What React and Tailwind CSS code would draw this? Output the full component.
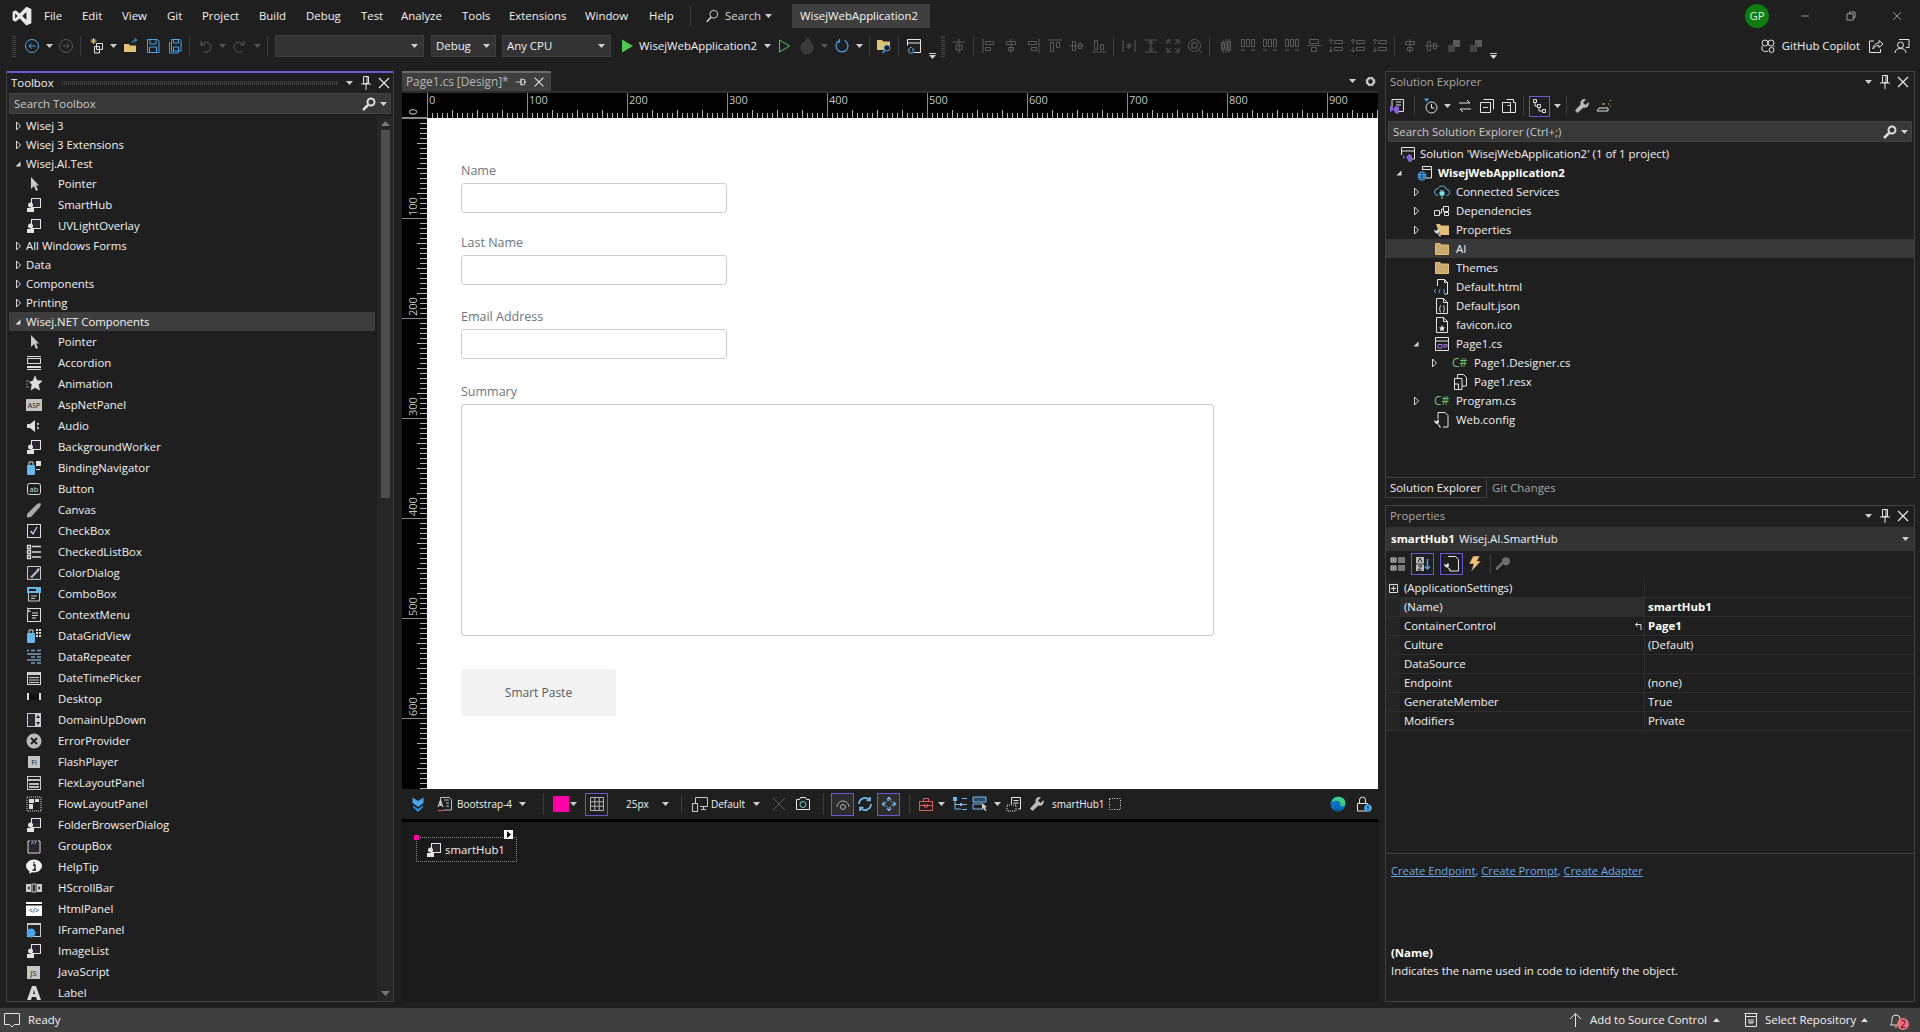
import React from 'react';

const W = '#e4e4e4', D = '#5a5a5a', B = '#4aa3e8', Y = '#e3c078';
const L1 = (d, s = W, sw = 1) => <path d={d} stroke={s} strokeWidth={sw} />;
const comp = <g><rect x="5.5" y="1.5" width="9" height="9" fill="#2a2433" stroke={W} /><circle cx="4.5" cy="8" r="2.5" fill={W} /><path d="M1 11h7v4H1z" fill={W} /></g>;
const dis = (d) => L1(d, D);

const G = {
  back: <g><circle cx="8" cy="8" r="6.5" stroke={B} /><path d="M11.5 8H5M7.5 5.5 5 8l2.5 2.5" stroke={B} /></g>,
  fwd: <g><circle cx="8" cy="8" r="6.5" stroke={D} /><path d="M4.5 8H11M8.5 5.5 11 8l-2.5 2.5" stroke={D} /></g>,
  newp: <g><path d="M6.5 5.5h6v6h-6zM4.5 8.5h5v6.5h-5z" stroke={W} fill="#1f1f1f" /><path d="M3.5 0v6M.5 3h6M1.5 1l4 4M5.5 1l-4 4" stroke={Y} /></g>,
  open: <g><path d="M1 6h5l1 1.5h6v6.5H1z" fill={Y} /><path d="M9 5c0-2 2-3 4-3M11.5.5 14 2l-2.5 2" stroke={B} /></g>,
  save: <path d="M2.5 1.5h10l1.500 1.500v11.500h-11.500zM5 1.500v4.500h6v-4.500M4.500 14.500v-5.500h7v5.500" stroke={B} />,
  saveall: <path d="M4.500 1.500h8.500l1 1v10.500h-9.500zM6.500 1.500v3.500h5v-3.500M6.500 14v-5h5v5M2.500 4v11h9" stroke={B} />,
  undo: <path d="M4 3v4h4M4.500 7a5 5 0 1 1 2 6.500" stroke={D} />,
  redo: <path d="M12 3v4H8M11.500 7a5 5 0 1 0-2 6.500" stroke={D} />,
  play: <path d="M3 1.500 14 8 3 14.500z" fill="#4ec94e" />,
  playo: <path d="M3.500 2 13.500 8l-10 6z" stroke="#4ec94e" />,
  fire: <path d="M9 0c1 3 5 5 5 10a6 6 0 0 1-12 0c0-3 1-4 3-6 0 1 .5 2 1 2 0-3 1-4 3-6z" fill="#3a3a3a" stroke="#444" />,
  restart: <path d="M5.500 2.500a6 6 0 1 0 5 0M5.500 1v3H2.500" stroke={B} strokeWidth="1.200" />,
  findf: <g><path d="M1 2h5l1 1.500h7V12H1z" fill={Y} /><circle cx="11" cy="10" r="3" fill="#1f1f1f" stroke={B} /><path d="M9 12.500 6.500 15" stroke={B} strokeWidth="1.500" /></g>,
  win: <g><path d="M1.500 1.500h13v13H8M1.500 1.500v6M1.500 5h13M11 14.500h3.500" stroke={W} /><path d="M1.500 12 5 9l3.500 3M3 11.500v3.500h4v-3.500" stroke={B} /></g>,
  taborder: dis('M8 1v14M2 4h12M5 7h6v5H5z'),
  a1: dis('M2 1v14M4.500 3.500h8v3h-8zM4.500 9.500h5v3h-5z'),
  a2: dis('M8 1v14M3.500 3.500h9v3h-9zM5.500 9.500h5v3h-5z'),
  a3: dis('M14 1v14M3.500 3.500h8v3h-8zM6.500 9.500h5v3h-5z'),
  a4: dis('M1 2h14M3.500 4.500h3v9h-3zM9.500 4.500h3v5h-3z'),
  a5: dis('M1 8h14M3.500 3.500h3v9h-3zM9.500 5.500h3v5h-3z'),
  a6: dis('M1 14h14M3.500 2.500h3v9h-3zM9.500 6.500h3v5h-3z'),
  a7: dis('M2 2v12M14 2v12M8 5v6M5.500 6.500l5 3M10.500 6.500l-5 3'),
  a8: dis('M2 2h12M2 14h12M8 3v10M5.500 5.500 8 3l2.500 2.500M5.500 10.500 8 13l2.500-2.500'),
  a9: dis('M2 6V2h4M10 2h4v4M14 10v4h-4M6 14H2v-4M3 3l3 3M13 3l-3 3M3 13l3-3M13 13l-3-3'),
  a10: <g><circle cx="7.500" cy="7.500" r="6" stroke={D} /><rect x="5" y="5" width="5" height="5" stroke={D} /><path d="m12 12 3 3" stroke={D} /></g>,
  a11: dis('M3.500 4.500h3v7h-3zM9.500 3.500h3v9h-3zM8 1v14M5 2v13M11 1v14'),
  a12: dis('M1.500 1.500h3v7h-3zM6.500 1.500h3v7h-3zM11.500 1.500h3v7h-3zM1 12h4M11 12h4'),
  a13: dis('M3.500 1.500h9v4h-9zM5.500 9.500h5v4h-5zM1 7.500h14'),
  a14: dis('M6.500 2.500h8v3h-8zM6.500 9.500h8v3h-8zM3 1v5M3 9v5M1 3l2-2 2 2M1 12l2 2 2-2'),
  a15: <g><rect x="7" y="2" width="7" height="7" fill={D} /><rect x="2" y="7" width="7" height="7" fill="#444" /></g>,
  copilot: <g><circle cx="5" cy="5" r="3" stroke={W} /><circle cx="11" cy="5" r="3" stroke={W} /><path d="M2 8v4c2 2 5 2 6 1M14 8v1" stroke={W} /><circle cx="11.500" cy="12" r="2.500" stroke={W} /></g>,
  share: <path d="M6 3H1.500v11.500h11V11M5 11c0-4 3-6 6-6V2.500L15 6l-4 3.500V7.500c-3 0-5 1-6 3.500" stroke={W} />,
  fb: <g><path d="M5 1.500h10v8h-3" stroke={W} /><circle cx="6.500" cy="7" r="3" stroke={W} /><path d="M1 15c0-3 2-4.500 5.500-4.500S12 12 12 15" stroke={W} /></g>,
  gridbox: L1('M1.500 1.500h13v13h-13zM1.500 5.800h13M1.500 10.200h13M5.800 1.500v13M10.200 1.500v13', '#b5b5b5'),
  wlogo: <g><path d="M2.500 1.500 8 5l5.500-3.500V7L8 11 2.500 7z" fill={B} /><path d="M3 9.500 8 13l5-3.500V11l-5 5-5-5z" fill="#2f8fe0" /></g>,
  theme: <g><path d="M3.500 10V1.500h9l2 2V14H7" stroke="#bdbdbd" /><path d="M7 4h5M9 7h3M9 10h3" stroke="#bdbdbd" /><path d="M1 11 3.500 4 6 11M2 9h3" stroke="#ddd" /><path d="M1 14.500h6" stroke="#e55" /></g>,
  device: <g><path d="M3.500 7V1.500h12v9H8M9 13.500h5M11.500 10.500v3" stroke="#c8c8c8" /><rect x=".5" y="7.500" width="5" height="8" fill="#1f1f1f" stroke="#c8c8c8" /></g>,
  x2: L1('M2 2l12 12M14 2 2 14', D),
  cam: <g><path d="M1.500 3.500h3l1-2h5l1 2h3v10h-13z" stroke={W} /><circle cx="8" cy="8.500" r="3" stroke="#6fd3c7" /></g>,
  eye: <g><path d="M2 11a6 6 0 0 1 12 0" stroke="#b0b0b0" /><circle cx="8" cy="11" r="2.500" stroke="#b0b0b0" /></g>,
  refresh: <path d="M2 8a6 6 0 0 1 10.500-4M14 8a6 6 0 0 1-10.500 4M13 1v3.500H9.500M3 15v-3.500h3.500" stroke="#74b9f0" strokeWidth="1.700" />,
  move: <g><path d="m8 .5 3 3H5zM8 15.500l-3-3h6zM.5 8l3-3v6zM15.500 8l-3 3V5z" fill="#74b9f0" /><circle cx="8" cy="8" r="3.500" stroke="#74b9f0" strokeDasharray="2 1.500" /></g>,
  toolboxr: <g><rect x="1.500" y="5.500" width="13" height="9" stroke="#e05a5a" /><path d="M5.500 5.500v-3h5v3M1.500 9.500h13M6.500 8v3h3V8" stroke="#e05a5a" /></g>,
  tree: <g><path d="M3 5v8h6M3 8.500h6" stroke="#74b9f0" /><path d="M1 1h4v4H1zM10 2h5v1h-5zM10 8h5v1h-5zM10 13h5v1h-5zM8 7h2v3H8z" fill="#74b9f0" /></g>,
  tabord: <g><path d="M1 1h13v5H1z" stroke="#74b9f0" fill="#2a4a6a" /><path d="M1 8h10v5H1z" stroke="#74b9f0" /><path d="m10 7 5 4-2 .5 1.500 3-1.500.5-1.500-3-1.500 1.500z" fill="#ccc" /></g>,
  docg: <g><path d="M5.500 8V1.500h9V13H12M7.500 4.500h5M7.500 7h5" stroke={W} /><path d="M1 9h9v6H1z" stroke={W} strokeDasharray="1 1" /></g>,
  wrench: <path d="M14.500 4 11.500 7 9 4.500l3-3a4 4 0 0 0-5.500 5L1 12.500 3.500 15 9.500 9.500a4 4 0 0 0 5-5.500z" fill="#b8b8b8" />,
  dots: <path d="M2.500 2.500h11v11h-11z" stroke={W} strokeDasharray="1 1.500" />,
  edge: <g><circle cx="8" cy="8" r="7.500" fill="#0b6fbf" /><path d="M1.500 6C3 1 9-.5 13 2c2 1.500 3 4.500 2 7-1 1.500-4 2-4.500 0C11 6 8 4 5 5z" fill="#3fc98a" /><path d="M5 9c0 4 5 6 9 3-2 3.500-6 4-9 2z" fill="#0a4f9a" /></g>,
  lock: <g><path d="M1.500 7.500h10v7.500h-10zM3.500 7.500V4a3 3 0 0 1 6 0v3.500" stroke={W} /><circle cx="12" cy="12" r="3.800" fill={B} /><path d="M12 10v2.500M12 13.500v1" stroke="#111" /></g>,
  vsfile: <g><path d="M3 1.500h11.500v12H9M3 1.500v8" stroke={W} /><path d="M7 4h5M7 7h5" stroke={W} /><path d="M1 8v6l2-1 2-2-2-2zM4 11l3-3 3 1v6l-3 1z" fill="#8a60d6" /></g>,
  clock: <g><path d="M1 .5h5L3.500 4z" fill={B} /><circle cx="8.500" cy="9.500" r="5.500" stroke={W} /><path d="M8.500 6v4h3" stroke={W} /></g>,
  sync: <path d="M2 5h11M10 2l3 3M14 11H3M6 14l-3-3" stroke={W} />,
  collapse: <g><path d="M4.500 1.500h10v10M1.500 4.500h10v10h-10z" stroke={W} /><path d="M4 9.500h5" stroke={W} /></g>,
  pages: <g><path d="M5.500 1.500h7v3h2v10h-5M1.500 4.500h8v10h-8z" stroke={W} /><path d="M6.500 7.500h3v7" stroke={W} /></g>,
  nodes: <g><path d="M1.500 1.500h3v3h-3zM5.500 6.500h3v3h-3zM10.500 11.500h3v3h-3z" stroke={W} /><path d="M3 4.500V8h2.500M7 9.500V13h3.500" stroke={W} /></g>,
  ell: <g><path d="M1 13h11v-3H3L1 13z" stroke={W} /><path d="M6 6h3M12 6h1M14 3l1-1M14 8h1" stroke={Y} /></g>,
  sol: <g><path d="M1.500 9V1.500h13V13H10M1.500 5h13" stroke={W} /><path d="M3 9l2 2-2 2zM6 11l3-3 3 1.500v6L9 16z" fill="#8a60d6" /></g>,
  proj: <g><path d="M5.500 5V1.500h9V13H8M5.500 4.500h9" stroke={W} /><circle cx="5" cy="11" r="4.500" fill={B} /><path d="M.5 11h9M5 6.500v9M1.500 8.500h7M1.500 13.500h7" stroke="#123" strokeWidth=".6" /></g>,
  conn: <g><path d="M4 11.500a3.500 3.500 0 0 1 0-7 4.500 4.500 0 0 1 8.500 1 3 3 0 0 1 0 6" stroke="#59b5d6" /><path d="M6 8h4v3H6zM8 11v4M7 8V6M9 8V6" fill="#7fe0e0" stroke="#7fe0e0" /></g>,
  deps: <g><path d="M.5 7.500h5v5h-5zM9.500 3.500h5v5h-5zM10.500 9.500h4v3h-4z" stroke={W} /><path d="M5.500 10h2V6h2" stroke={W} /></g>,
  propf: <g><path d="M2 2h4l1 1.500h8V13H6z" fill={Y} /><path d="M7 14 4 11a2.500 2.500 0 0 0 0-4L2 9 .5 7.500a3 3 0 0 0 3 4L6 15z" fill="#ddd" /></g>,
  folder: <path d="M1.500 2.500h4.500l1.500 1.500h7v9.500h-13z" fill="#c8a86c" stroke="#e3c078" />,
  html: <g><path d="M3.500 7V.5h7l3 3V15H10M10.500.5v3h3" stroke={W} /><path d="M2 10l-2 2 2 2M6 10l-1 4M9 10l2 2-2 2" stroke={B} /></g>,
  json: <g><path d="M2.500 .5h7l4 4v11h-11zM9.500.5v4h4" stroke={W} /><path d="M7 7.500c-1 0-1 .5-1 2s-1 1.500-1 1.500 1 0 1 1.500 0 1.500 1 1.500M9 7.500c1 0 1 .5 1 2s1 1.500 1 1.500-1 0-1 1.500 0 1.500-1 1.500" stroke={W} /></g>,
  ico: <g><path d="M2.500 .5h7l4 4v11h-11zM9.500.5v4h4" stroke={W} /><path d="m8 8 1 2.200 2 .3-1.500 1.500.4 2.200-1.900-1-1.900 1 .4-2.200L5 10.500l2-.3z" fill={W} /></g>,
  form: <g><path d="M1.500 1.500h13v13h-13zM1.500 5h13" stroke={W} /><path d="M4 8.500h4v3.500H4zM10 8.500h3v2.500h-3z" stroke="#a078e0" /></g>,
  resx: <g><path d="M5.500 4V.5h6l3 3V12H10M2.500 4.500h7.500v11h-7.500z" stroke={W} /><path d="M2.500 10h4v5.500" stroke={W} /></g>,
  config: <g><path d="M4 7V.5h7l3 3V15H9" stroke={W} /><path d="M7 15 4 11.500a2.500 2.500 0 0 0 0-4L2 9.500.5 8a3 3 0 0 0 3 4L6 16z" fill="#ddd" /></g>,
  catg: <g><path d="M1 2h5v4H1zM1 10h5v4H1z" stroke={W} /><path d="M8 2h7M8 4h7M8 6h7M8 10h7M8 12h7M8 14h7M3.500 3v2M3.500 11v2M2 12h3M2 4h3" stroke={W} strokeWidth=".9" /></g>,
  az: <g><rect x="1" y="1" width="8" height="6.500" fill="#bbb" /><rect x="1" y="8.500" width="8" height="6.500" fill="#bbb" /><path d="m3 6 2-4 2 4M3 10h4l-4 4h4" stroke="#222" /><path d="M12.500 3v10M10 10.500l2.500 2.500 2.500-2.500" stroke={B} strokeWidth="1.500" /></g>,
  propp: <g><path d="M4 .5h7.500l3 3V15h-9" stroke={W} /><path d="M7 14 4 11a2.500 2.500 0 0 0 0-4L2 9 .5 7.500a3 3 0 0 0 3 4L6 15z" fill={W} /></g>,
  flash: <path d="M7 0h7l-3 5h4L5 16l2.500-8H3z" fill="#f5c27a" stroke="#1f1f1f" strokeWidth=".5" />,
  key: <path d="M15 5a4 4 0 0 1-7 3L2.500 14H1v-2.500l6-6A4 4 0 0 1 15 5z" fill="#6e6e6e" />,
  up: <path d="M7.500 15V1.500M2 7l5.500-5.500L13 7" stroke={W} />,
  repo: <g><path d="M1.500 1.500h13M2.500 1.500v3h11v-3M2.500 4.500v10h11v-10" stroke={W} /><path d="M6 7v4h4V7M8 7v4" stroke={W} /></g>,
  bell: <path d="M1.500 13h11c-1.500-1.500-1.500-4-1.500-6a4 4 0 0 0-8 0c0 2 0 4.500-1.500 6zM6 15h2" stroke={W} />,
  comment: <path d="M.5 1.500h15v11h-5l-2.500 2.500-2.500-2.500h-5z" stroke={W} />,
  searchw: <g><circle cx="10" cy="6" r="4.500" stroke={W} /><path d="M7 9.500 2 14.500" stroke={W} strokeWidth="1.500" /></g>,
  searchb: <g><circle cx="10" cy="6" r="3.500" stroke="#ddd" strokeWidth="2" /><path d="M7 9 2 14" stroke="#ddd" strokeWidth="2.500" /></g>,
  pin: <path d="M5.500 1.500h5v7h-5zM3 9h10M8 9v6M9 2v6" stroke={W} />,
  close: <path d="M3 3l10 10M13 3 3 13" stroke={W} strokeWidth="1.300" />,
  pinh: <path d="M8 5v6h4V5zM8 8H2M8 4v8M13 7v2" stroke="#ddd" />,
  gear: <g><circle cx="8" cy="8" r="4.500" stroke="#ccc" strokeWidth="3" strokeDasharray="2.500 1" /><circle cx="8" cy="8" r="4" stroke="#ccc" strokeWidth="2" /></g>,
  min: L1('M2 8h12', W),
  restore: L1('M5.500 4.500v-3h9v9h-3M1.500 4.500h10v10h-10z', W),
  closew: L1('M2 2l12 12M14 2 2 14', W),
  pointer: <path d="M5 1v12l3-3 2 5 2-1-2-4.500h3z" fill="#c8c8c8" />,
  comp,
  accordion: <g><path d="M1 1h14v1H1zM1 11h14v2H1zM1 14h14v1H1zM1 3h14v6H1z" fill="#ddd" /><rect x="2" y="4" width="12" height="4" fill="#222" /></g>,
  anim: <path d="m9 0 2 4.500 5 .5-3.500 3.500 1 5.500L9 11.500 5 14 6 8.500 3.500 6 7 5zM0 5h3M0 8h2M0 11h3" fill="#ddd" stroke="#ddd" strokeWidth=".6" />,
  asp: <g><rect width="16" height="12" y="2" fill="#c4c4c4" /><text x="8" y="11" fontSize="7" textAnchor="middle" fill="#111">ASP</text></g>,
  audio: <g><path d="M1 6h3l5-4v12l-5-4H1z" fill="#ddd" /><path d="M11 5l2 1-2 1M11 9l2 1-2 1" stroke="#ddd" /></g>,
  binding: <g><rect x="1" y="5" width="8" height="10" rx="1" fill="#69b6e8" /><path d="M3 5V2h4v3" stroke="#ddd" /><rect x="10" y="1" width="5" height="5" fill="#ddd" /><path d="M10 9h4v1h-4z" fill="#ddd" /></g>,
  button: <g><rect x="1.500" y="2.500" width="13" height="11" rx="2" stroke="#ddd" /><text x="8" y="11" fontSize="7.500" textAnchor="middle" fill="#ddd">ab</text></g>,
  pencil: <path d="M1 12 11 2l3-1 1 1-1 3L5 15l-4 .5z" fill="#aaa" />,
  check: <g><rect x="1.500" y="1.500" width="13" height="13" stroke="#ddd" fill="#201d28" /><path d="m4.500 8 2.500 3 4-7" stroke="#ddd" strokeWidth="1.200" /></g>,
  clist: <path d="M1.500 1.500h3v3h-3zM1.500 6.500h3v3h-3zM1.500 11.500h3v3h-3zM6 2.500h9M6 8h9M6 13h9" stroke="#ddd" strokeWidth="1.300" />,
  color: <g><path d="M1.500 1.500h13v13h-13z" stroke="#ccc" fill="#24212a" /><path d="m4 12 6-6 2-3 2 1-2 3-6 6z" fill="#bbb" /><path d="M2 14h2" stroke="#e44" /><path d="M6 14h2" stroke="#4c6" /><path d="M10 14h2" stroke="#49d" /></g>,
  combo: <g><rect x="1" y="1" width="14" height="6" fill="#69b6e8" /><rect x="3" y="3" width="7" height="2" fill="#111" /><path d="M2.500 7v8h11V7M5 10h6M5 12.500h4" stroke="#ccc" /></g>,
  context: <g><rect x="1.500" y="1.500" width="13" height="13" stroke="#ddd" /><path d="M6 6h6M6 8.500h6M6 11h4" stroke="#ddd" /><path d="M1 0v7l2-2 2 0z" fill="#aaa" /></g>,
  dgrid: <g><rect x="1" y="5" width="8" height="10" rx="1" fill="#69b6e8" /><path d="M3 5V2h4v3" stroke="#ddd" /><path d="M10 1h2v2h-2zM13 1h2v2h-2zM10 4h2v2h-2zM13 4h2v2h-2zM10 7h2v2h-2zM13 7h2v2h-2z" fill="#ddd" /></g>,
  repeat: <path d="M1 1.500h2M5 1.500h4M11 1.500h4M1 5h14M5 8h4M11 8h4M1 11h14M5 14h4M11 14h4" stroke="#7c9cc0" strokeWidth="1.500" />,
  date: <g><rect x="1.500" y="2.500" width="13" height="12" stroke="#ddd" fill="#222" /><path d="M2 2h12v3H2z" fill="#ccc" /><path d="M3 7h10v1H3zM3 9.500h10v1H3zM3 12h10v1H3z" fill="#ccc" /></g>,
  desktop: <g><path d="M1 2h2v7H1zM13 2h2v7h-2z" fill="#ddd" /><path d="M3 3h10v6H3z" fill="#111" /></g>,
  updown: <g><rect x="1" y="1" width="14" height="14" fill="#ccc" /><rect x="2" y="2" width="7" height="12" fill="#2a2433" /><path d="m10 6 2-3 2 3zM10 10l2 3 2-3z" fill="#222" /></g>,
  error: <g><circle cx="8" cy="8" r="7.500" fill="#bbb" /><path d="m5 5 6 6M11 5l-6 6" stroke="#222" strokeWidth="2" /></g>,
  flashp: <g><rect x="2" y="2" width="12" height="12" fill="#c4c4c4" /><text x="8" y="11" fontSize="7" textAnchor="middle" fill="#111">Fl</text></g>,
  flex: <g><rect x="1.500" y="1.500" width="13" height="13" stroke="#ccc" /><path d="M2 4h12v2H2zM3 8h10v2H3zM3 11h10v2H3z" fill="#bbb" /></g>,
  flow: <g><path d="M1 1h14v14H1z" stroke="#ddd" strokeDasharray="1 1" /><path d="M3 3h5v4H3zM9 3h4v3H9zM3 8h4v5H3z" fill="#ddd" /></g>,
  group: <g><path d="M2 3v12h12V3h-2M4 3H2" stroke="#ddd" /><path d="M3 5h10v9H3z" fill="#2a2433" /><text x="8" y="5.500" fontSize="5.500" textAnchor="middle" fill="#ddd">XY</text></g>,
  help: <g><ellipse cx="8" cy="7" rx="8" ry="6.500" fill="#f0f0f0" /><path d="M4 11 3 15l5-3z" fill="#f0f0f0" /><path d="M8 3v1.500M7 6h2v5M6.500 11H10" stroke="#111" strokeWidth="1.300" /></g>,
  hscroll: <g><rect y="4" width="5" height="8" fill="#ccc" /><rect x="6" y="4" width="4" height="8" fill="#333" stroke="#ccc" /><rect x="11" y="4" width="5" height="8" fill="#ccc" /><path d="M3.500 6v4L1.500 8zM12.500 6v4l2-2z" fill="#111" /></g>,
  htmlp: <g><rect y="1" width="16" height="14" fill="#fff" /><path d="M0 3h16v1.500H0z" fill="#111" /><text x="8" y="12" fontSize="7" textAnchor="middle" fill="#111">{'</>'}</text></g>,
  iframe: <g><rect x="1.500" y="1.500" width="13" height="13" stroke="#ccc" fill="#222" /><path d="M1 1h14v2H1z" fill="#ccc" /><circle cx="5" cy="11" r="4.500" fill={B} /></g>,
  js: <g><rect x="1" y="2" width="13" height="13" fill="#c4c4c4" /><text x="7.500" y="12" fontSize="8" textAnchor="middle" fill="#222">JS</text></g>,
  label: <path d="M6 1h4l5 14h-4l-1-3H6l-1 3H1zM7 9h2L8 5z" fill="#d8d8d8" fillRule="evenodd" />,
};

const Ic = ({ n, c = '', s = 'w-4 h-4' }) => <svg viewBox="0 0 16 16" fill="none" className={`${s} shrink-0 ${c}`}>{G[n]}</svg>;
const Arr = ({ c = '', col = '#d0d0d0' }) => <svg viewBox="0 0 7 4" className={`w-[7px] h-[4px] shrink-0 ${c}`}><path d="M0 0h7L3.500 4z" fill={col} /></svg>;
const Sep = ({ c = '' }) => <div className={`w-px h-[20px] bg-[#3d3d3d] shrink-0 ${c}`} />;
const Grip = ({ c = '' }) => <div className={`w-[4px] h-[22px] shrink-0 bg-[repeating-linear-gradient(0deg,#444_0,#444_1px,transparent_1px,transparent_2px)] ${c}`} />;
const Tri = ({ open }) => (
  <svg viewBox="0 0 10 10" className="w-[10px] h-[10px] shrink-0">
    {open ? <path d="M7.500 2.500v5h-5z" fill="#d8d8d8" /> : <path d="M3.500 1 7.500 5l-4 4z" stroke="#d8d8d8" fill="none" />}
  </svg>
);
const Combo = ({ w, text, ml }) => (
  <div className={`${w} ${ml} h-[22px] shrink-0 bg-[#333333] border border-[#3d3d3d] flex items-center pl-[4px] pr-[5px]`}>
    <span>{text}</span><Arr c="ml-auto" />
  </div>
);
const Search = ({ text, c }) => (
  <div className={`h-[21px] shrink-0 bg-[#383838] border border-[#434343] flex items-center pl-[4px] pr-[3px] text-[#c8c8c8] ${c}`}>
    <span>{text}</span><Ic n="searchb" c="ml-auto" /><Arr c="ml-[3px]" />
  </div>
);

const MENU = [['File', 'w-[38px]'], ['Edit', 'w-[40px]'], ['View', 'w-[45px]'], ['Git', 'w-[35px]'], ['Project', 'w-[57px]'], ['Build', 'w-[47px]'], ['Debug', 'w-[55px]'], ['Test', 'w-[40px]'], ['Analyze', 'w-[61px]'], ['Tools', 'w-[47px]'], ['Extensions', 'w-[76px]'], ['Window', 'w-[64px]'], ['Help', 'w-[41px]']];

function TitleBar() {
  return (
    <div className="h-[32px] flex items-center shrink-0">
      <svg viewBox="0 0 16 16" className="w-[20px] h-[20px] ml-[12px] mr-[12px] shrink-0">
        <path d="M11.500.5 15.500 2.300v11.400l-4 1.800L6.200 10 2.800 12.600.5 11.400V4.600l2.300-1.200L6.200 6zM2.500 6v4l2-2zM11.500 4.800 8.300 8l3.200 3.200z" fill="#e8e8e8" fillRule="evenodd" />
      </svg>
      {MENU.map(([t, w]) => <div key={t} className={`${w} shrink-0`}>{t}</div>)}
      <div className="w-px h-[20px] bg-[#3d3d3d] shrink-0" />
      <Ic n="searchw" c="ml-[14px]" s="w-[14px] h-[14px]" />
      <span className="ml-[6px] w-[36px] text-[#d8d8d8]">Search</span>
      <Arr c="ml-[4px]" />
      <div className="ml-[20px] w-[138px] h-[24px] bg-[#3f3f3f] flex items-center pl-[8px] shrink-0 text-[#f5f5f5]">WisejWebApplication2</div>
      <div className="ml-auto w-[24px] h-[24px] rounded-full bg-[#107c10] flex items-center justify-center text-[#d8f0d8] shrink-0">GP</div>
      <Ic n="min" c="ml-[31px]" s="w-[10px] h-[10px]" />
      <Ic n="restore" c="ml-[36px]" s="w-[10px] h-[10px]" />
      <Ic n="closew" c="ml-[36px] mr-[18px]" s="w-[10px] h-[10px]" />
    </div>
  );
}

function ToolBar() {
  return (
    <div className="h-[38px] flex items-center pl-[12px] pb-[10px] shrink-0">
      <Grip />
      <Ic n="back" c="ml-[8px]" /><Arr c="ml-[6px]" /><Ic n="fwd" c="ml-[5px]" /><Sep c="ml-[6px]" />
      <Ic n="newp" c="ml-[9px]" /><Arr c="ml-[4px]" /><Ic n="open" c="ml-[6px]" /><Ic n="save" c="ml-[6px]" /><Ic n="saveall" c="ml-[6px]" /><Sep c="ml-[6px]" />
      <Ic n="undo" c="ml-[7px]" /><Arr c="ml-[6px]" col="#555" /><Ic n="redo" c="ml-[6px]" /><Arr c="ml-[6px]" col="#555" /><Sep c="ml-[6px]" />
      <Combo w="w-[149px]" ml="ml-[7px]" text="" />
      <Combo w="w-[65px]" ml="ml-[7px]" text="Debug" />
      <Combo w="w-[109px]" ml="ml-[6px]" text="Any CPU" />
      <Ic n="play" c="ml-[8px]" />
      <span className="ml-[4px] w-[119px] shrink-0 whitespace-nowrap">WisejWebApplication2</span>
      <Arr c="ml-[6px]" /><Ic n="playo" c="ml-[5px]" /><Ic n="fire" c="ml-[7px]" /><Arr c="ml-[6px]" col="#555" /><Ic n="restart" c="ml-[6px]" /><Arr c="ml-[6px]" /><Sep c="ml-[6px]" />
      <Ic n="findf" c="ml-[6px]" /><Sep c="ml-[6px]" /><Ic n="win" c="ml-[7px]" />
      <div className="ml-[7px] w-[7px] flex flex-col items-center gap-[1px] self-end mb-[1px] shrink-0"><div className="w-[7px] h-px bg-[#ccc]" /><Arr /></div>
      <Grip c="ml-[5px]" />
      <Ic n="taborder" c="ml-[6px]" /><Sep c="ml-[6px]" />
      <div className="flex items-center gap-[6px] ml-[7px]">
        <Ic n="a1" /><Ic n="a2" /><Ic n="a3" /><Ic n="a4" /><Ic n="a5" /><Ic n="a6" />
      </div>
      <Sep c="ml-[6px]" />
      <div className="flex items-center gap-[6px] ml-[7px]">
        <Ic n="a7" /><Ic n="a8" /><Ic n="a9" /><Ic n="a10" />
      </div>
      <Sep c="ml-[6px]" />
      <div className="flex items-center gap-[6px] ml-[8px]">
        <Ic n="a11" /><Ic n="a12" /><Ic n="a12" /><Ic n="a12" /><Ic n="a13" /><Ic n="a14" /><Ic n="a14" /><Ic n="a14" />
      </div>
      <Sep c="ml-[6px]" />
      <div className="flex items-center gap-[6px] ml-[7px]">
        <Ic n="a2" /><Ic n="a5" /><Ic n="a15" /><Ic n="a15" />
      </div>
      <div className="ml-[6px] w-[7px] flex flex-col items-center gap-[1px] self-end mb-[1px] shrink-0"><div className="w-[7px] h-px bg-[#ccc]" /><Arr /></div>
      <Ic n="copilot" c="ml-auto" />
      <span className="ml-[6px] whitespace-nowrap">GitHub Copilot</span>
      <Ic n="share" c="ml-[8px]" /><Ic n="fb" c="ml-[10px] mr-[10px]" />
    </div>
  );
}

const Head = ({ title, active }) => (
  <div className="flex items-center h-[20px] shrink-0 pl-[4px]">
    <span className={active ? 'text-[#f1f1f1]' : 'text-[#a8a8a8]'}>{title}</span>
    {active && <div className="flex-1 h-[4px] ml-[8px] mr-[8px] bg-[repeating-linear-gradient(90deg,#444_0,#444_1px,transparent_1px,transparent_2px)]" />}
    <Arr c={active ? 'ml-0' : 'ml-auto'} />
    <Ic n="pin" c="ml-[5px]" />
    <Ic n="close" c={active ? 'ml-[2px] mr-[1px]' : 'ml-[2px] mr-[3px]'} />
  </div>
);

const TB = [
  ['c', 'Wisej 3'], ['c', 'Wisej 3 Extensions'], ['o', 'Wisej.AI.Test'],
  ['i', 'Pointer', 'pointer'], ['i', 'SmartHub', 'comp'], ['i', 'UVLightOverlay', 'comp'],
  ['c', 'All Windows Forms'], ['c', 'Data'], ['c', 'Components'], ['c', 'Printing'], ['h', 'Wisej.NET Components'],
  ['i', 'Pointer', 'pointer'], ['i', 'Accordion', 'accordion'], ['i', 'Animation', 'anim'], ['i', 'AspNetPanel', 'asp'], ['i', 'Audio', 'audio'],
  ['i', 'BackgroundWorker', 'comp'], ['i', 'BindingNavigator', 'binding'], ['i', 'Button', 'button'], ['i', 'Canvas', 'pencil'], ['i', 'CheckBox', 'check'],
  ['i', 'CheckedListBox', 'clist'], ['i', 'ColorDialog', 'color'], ['i', 'ComboBox', 'combo'], ['i', 'ContextMenu', 'context'], ['i', 'DataGridView', 'dgrid'],
  ['i', 'DataRepeater', 'repeat'], ['i', 'DateTimePicker', 'date'], ['i', 'Desktop', 'desktop'], ['i', 'DomainUpDown', 'updown'], ['i', 'ErrorProvider', 'error'],
  ['i', 'FlashPlayer', 'flashp'], ['i', 'FlexLayoutPanel', 'flex'], ['i', 'FlowLayoutPanel', 'flow'], ['i', 'FolderBrowserDialog', 'comp'], ['i', 'GroupBox', 'group'],
  ['i', 'HelpTip', 'help'], ['i', 'HScrollBar', 'hscroll'], ['i', 'HtmlPanel', 'htmlp'], ['i', 'IFramePanel', 'iframe'], ['i', 'ImageList', 'comp'], ['i', 'JavaScript', 'js'], ['i', 'Label', 'label'],
];

function Toolbox() {
  return (
    <div className="w-[388px] shrink-0 flex flex-col border-x border-b border-[#3f3f3f]">
      <div className="h-[2px] bg-[#6a58d8] shrink-0" />
      <Head title="Toolbox" active />
      <Search text="Search Toolbox" c="mx-[2px]" />
      <div className="flex flex-1 min-h-0 pt-[2px]">
        <div className="ml-[2px] w-[366px] mr-[2px] overflow-hidden">
          {TB.map(([k, t, ic], i) => k === 'i' ? (
            <div key={i} className="h-[21px] flex items-center pl-[17px]"><Ic n={ic} /><span className="ml-[16px]">{t}</span></div>
          ) : (
            <div key={i} className={`h-[19px] flex items-center pl-[4px] ${k === 'h' ? 'bg-[#3d3d3d]' : ''}`}><Tri open={k !== 'c'} /><span className="ml-[3px]">{t}</span></div>
          ))}
        </div>
        <div className="w-[16px] bg-[#262626] flex flex-col items-center py-[5px]">
          <svg viewBox="0 0 9 5" className="w-[9px] h-[5px] shrink-0"><path d="M0 5h9L4.500 0z" fill="#777" /></svg>
          <div className="w-[9px] h-[368px] bg-[#4d4d4d] mt-[4px] shrink-0" />
          <svg viewBox="0 0 9 5" className="w-[9px] h-[5px] mt-auto shrink-0"><path d="M0 0h9L4.500 5z" fill="#777" /></svg>
        </div>
      </div>
    </div>
  );
}

const range = (n) => Array.from({ length: n }, (_, i) => i);

function HRuler() {
  const ticks = range(191).map((i) => {
    const x = i * 5 + 0.5;
    const big = i % 20 === 0, med = i % 5 === 0;
    return <path key={i} d={`M${x} ${big ? 0 : med ? 17 : 20}V25`} stroke={big ? '#8a8a8a' : '#b4b4b4'} />;
  });
  return (
    <svg className="flex-1 h-[25px] block" viewBox="0 0 951 25" preserveAspectRatio="xMinYMin">
      {ticks}
      {range(10).map((i) => <text key={i} x={i * 100 + 2} y="11" fontSize="11" fill="#c4c4c4">{i * 100}</text>)}
    </svg>
  );
}
function VRuler() {
  return (
    <svg className="w-[25px] h-[671px] block shrink-0" viewBox="0 0 25 671">
      {range(135).map((i) => {
        const y = i * 5 + 0.5, big = i % 20 === 0, med = i % 5 === 0;
        return <path key={i} d={`M${big ? 0 : med ? 15 : 18} ${y}H25`} stroke={big ? '#8a8a8a' : '#b4b4b4'} />;
      })}
      {range(6).map((i) => <text key={i} transform={`translate(15 ${(i + 1) * 100 - 2}) rotate(-90)`} fontSize="11" fill="#c4c4c4">{(i + 1) * 100}</text>)}
    </svg>
  );
}

const Lbl = ({ t, c }) => <div className={`h-[18px] leading-[18px] text-[12.5px] text-[#6c757d] ${c}`}>{t}</div>;
const Inp = ({ c }) => <div className={`w-[266px] h-[30px] bg-white border border-[#cccccc] rounded-[3px] ${c}`} />;

function Document() {
  return (
    <div className="ml-[8px] w-[976px] shrink-0 flex flex-col">
      <div className="h-[20px] flex shrink-0 items-stretch">
        <div className="w-[149px] bg-[#3f3f3f] border-t-2 border-[#6b6b6b] flex items-center pl-[4px] text-[#b8b8b8] text-[11.8px] shrink-0">
          <span className="w-[108px] whitespace-nowrap">Page1.cs [Design]*</span>
          <Ic n="pinh" s="w-[14px] h-[14px]" /><Ic n="close" c="ml-[4px]" s="w-[14px] h-[14px]" />
        </div>
        <Arr c="ml-auto self-center" />
        <Ic n="gear" c="ml-[8px] mr-[1px] self-center" s="w-[13px] h-[13px]" />
      </div>
      <div className="h-[2px] bg-[#2d2d2d] shrink-0" />
      <div className="h-[25px] flex bg-black shrink-0">
        <svg className="w-[25px] h-[25px] shrink-0" viewBox="0 0 25 25">
          <text transform="translate(15 22) rotate(-90)" fontSize="11" fill="#c4c4c4">0</text>
          <path d="M0 24.500H25" stroke="#8a8a8a" />
        </svg>
        <HRuler />
      </div>
      <div className="h-[671px] flex shrink-0 bg-black">
        <VRuler />
        <div className="flex-1 bg-white pl-[34px] pt-[44px]">
          <Lbl t="Name" />
          <Inp c="mt-[3px]" />
          <Lbl t="Last Name" c="mt-[21px]" />
          <Inp c="mt-[3px]" />
          <Lbl t="Email Address" c="mt-[23px]" />
          <Inp c="mt-[3px]" />
          <Lbl t="Summary" c="mt-[24px]" />
          <div className="w-[753px] h-[232px] border border-[#cccccc] rounded-[3px] mt-[3px]" />
          <div className="w-[155px] h-[47px] mt-[33px] bg-[#f3f3f3] rounded-[2px] flex items-center justify-center text-[12px] text-[#555b60]">Smart Paste</div>
        </div>
      </div>
      <div className="h-[30px] flex items-center shrink-0 bg-[#1f1f1f] text-[10px]">
        <Ic n="wlogo" c="ml-[8px]" /><Ic n="theme" c="ml-[11px]" />
        <span className="ml-[4px] w-[54px] whitespace-nowrap">Bootstrap-4</span><Arr c="ml-[8px]" /><Sep c="ml-[17px]" />
        <div className="ml-[9px] w-[16px] h-[16px] bg-[#ff00a8] shrink-0" /><Arr c="ml-[1px]" />
        <div className="ml-[8px] w-[23px] h-[23px] border border-[#6a58d8] flex items-center justify-center shrink-0"><Ic n="gridbox" /></div>
        <span className="ml-[18px] w-[23px]">25px</span><Arr c="ml-[13px]" /><Sep c="ml-[12px]" />
        <Ic n="device" c="ml-[10px]" /><span className="ml-[3px] w-[34px]">Default</span><Arr c="ml-[8px]" />
        <Ic n="x2" c="ml-[11px]" /><Ic n="cam" c="ml-[8px]" /><Sep c="ml-[12px]" />
        <div className="ml-[7px] w-[23px] h-[23px] border border-[#6a58d8] bg-[#2d2d2d] flex items-center justify-center shrink-0"><Ic n="eye" /></div>
        <Ic n="refresh" c="ml-[3px]" />
        <div className="ml-[4px] w-[23px] h-[23px] border border-[#6a58d8] bg-[#2d2d2d] flex items-center justify-center shrink-0"><Ic n="move" /></div>
        <Sep c="ml-[9px]" />
        <Ic n="toolboxr" c="ml-[8px]" /><Arr c="ml-[4px]" /><Ic n="tree" c="ml-[7px]" /><Ic n="tabord" c="ml-[4px]" /><Arr c="ml-[6px]" />
        <Ic n="docg" c="ml-[5px]" /><Ic n="wrench" c="ml-[7px]" />
        <span className="ml-[7px] w-[50px] whitespace-nowrap">smartHub1</span><Ic n="dots" c="ml-[5px]" />
        <Ic n="edge" c="ml-auto" /><Ic n="lock" c="ml-[10px] mr-[6px]" />
      </div>
      <div className="h-[3px] bg-black shrink-0" />
      <div className="flex-1 bg-[#1a1a1a] pl-[14px] pt-[15px]">
        <div className="relative w-[101px] h-[25px] border border-dotted border-[#8a8a8a] flex items-center pl-[9px]">
          <Ic n="comp" /><span className="ml-[3px]">smartHub1</span>
          <div className="absolute -left-[3px] -top-[3px] w-[5px] h-[5px] bg-[#ff00a8]" />
          <div className="absolute left-[87px] -top-[8px] w-[9px] h-[9px] bg-white flex items-center justify-center"><svg viewBox="0 0 4 7" className="w-[4px] h-[7px]"><path d="M0 0 4 3.500 0 7z" fill="#000" /></svg></div>
        </div>
      </div>
    </div>
  );
}

const LV = ['pl-[4px]', 'pl-[8px]', 'pl-[25px]', 'pl-[43px]'];
const SOL = [
  [0, null, 'sol', "Solution 'WisejWebApplication2' (1 of 1 project)"],
  [1, 'o', 'proj', 'WisejWebApplication2', 'b'],
  [2, 'c', 'conn', 'Connected Services'],
  [2, 'c', 'deps', 'Dependencies'],
  [2, 'c', 'propf', 'Properties'],
  [2, null, 'folder', 'AI', 'h'],
  [2, null, 'folder', 'Themes'],
  [2, null, 'html', 'Default.html'],
  [2, null, 'json', 'Default.json'],
  [2, null, 'ico', 'favicon.ico'],
  [2, 'o', 'form', 'Page1.cs'],
  [3, 'c', null, 'Page1.Designer.cs'],
  [3, null, 'resx', 'Page1.resx'],
  [2, 'c', null, 'Program.cs'],
  [2, null, 'config', 'Web.config'],
];

function SolutionExplorer() {
  return (
    <div className="h-[406px] shrink-0 flex flex-col border-x border-t border-[#3f3f3f]">
      <div className="h-[21px] shrink-0"><Head title="Solution Explorer" /></div>
      <div className="h-[26px] flex items-center shrink-0">
        <Ic n="vsfile" c="ml-[3px]" /><Sep c="ml-[9px]" /><Ic n="clock" c="ml-[8px]" /><Arr c="ml-[5px]" />
        <Ic n="sync" c="ml-[6px]" /><Ic n="collapse" c="ml-[6px]" /><Ic n="pages" c="ml-[6px]" /><Sep c="ml-[6px]" />
        <div className="ml-[5px] w-[21px] h-[21px] border border-[#6a58d8] flex items-center justify-center shrink-0"><Ic n="nodes" /></div>
        <Arr c="ml-[4px]" /><Sep c="ml-[5px]" /><Ic n="wrench" c="ml-[7px]" /><Ic n="ell" c="ml-[6px]" />
      </div>
      <Search text="Search Solution Explorer (Ctrl+;)" c="mt-[2px] mx-[2px]" />
      <div className="pt-[2px]">
        {SOL.map(([lv, arrow, ic, t, f], i) => (
          <div key={i} className={`h-[19px] flex items-center ${LV[lv]} ${f === 'h' ? 'bg-[#383838]' : ''}`}>
            {arrow ? <Tri open={arrow === 'o'} /> : <div className="w-[10px] shrink-0" />}
            {ic ? <Ic n={ic} c={lv === 0 ? '' : 'ml-[13px]'} /> : <span className="ml-[13px] w-4 shrink-0 text-[#6cc070] text-[12px] whitespace-nowrap">C#</span>}
            <span className={`${lv === 0 ? 'ml-[4px]' : lv === 1 ? 'ml-[5px]' : 'ml-[6px]'} ${f === 'b' ? 'font-bold text-white' : ''}`}>{t}</span>
          </div>
        ))}
      </div>
    </div>
  );
}

const PR = [
  ['(Name)', 'smartHub1', 'b', true],
  ['ContainerControl', 'Page1', 'b', false, true],
  ['Culture', '(Default)'],
  ['DataSource', ''],
  ['Endpoint', '(none)'],
  ['GenerateMember', 'True'],
  ['Modifiers', 'Private'],
];

function Properties() {
  return (
    <div className="flex-1 mt-[7px] flex flex-col border border-[#3f3f3f] min-h-0">
      <div className="h-[21px] shrink-0"><Head title="Properties" /></div>
      <div className="h-[24px] shrink-0 bg-[#333333] flex items-center pl-[5px] pr-[5px]">
        <span className="font-bold text-white w-[68px] whitespace-nowrap">smartHub1</span><span>Wisej.AI.SmartHub</span><Arr c="ml-auto" />
      </div>
      <div className="h-[26px] shrink-0 flex items-center">
        <Ic n="catg" c="ml-[4px]" />
        <div className="ml-[5px] w-[23px] h-[22px] border border-[#6a58d8] flex items-center justify-center shrink-0"><Ic n="az" /></div>
        <div className="ml-[6px] w-[23px] h-[22px] border border-[#6a58d8] flex items-center justify-center shrink-0"><Ic n="propp" /></div>
        <Ic n="flash" c="ml-[3px]" /><Sep c="ml-[8px]" /><Ic n="key" c="ml-[4px]" />
      </div>
      <div className="mt-[2px] shrink-0">
        <div className="h-[19px] flex border-b border-[#2d2d2d]">
          <div className="w-[14px] flex items-center justify-center shrink-0 bg-[#252525]"><svg viewBox="0 0 9 9" className="w-[9px] h-[9px]"><path d="M.5.500h8v8h-8zM2 4.500h5M4.500 2v5" stroke="#ddd" fill="none" /></svg></div>
          <div className="w-[245px] pl-[4px] flex items-center border-r border-[#2d2d2d] shrink-0">(ApplicationSettings)</div>
        </div>
        {PR.map(([k, v, b, hl, ret]) => (
          <div key={k} className="h-[19px] flex border-b border-[#2d2d2d]">
            <div className="w-[14px] shrink-0 bg-[#252525]" />
            <div className={`w-[245px] pl-[4px] pr-[2px] flex items-center border-r border-[#2d2d2d] shrink-0 ${hl ? 'bg-[#2d2d2d]' : ''}`}>
              <span>{k}</span>
              {ret && <svg viewBox="0 0 8 8" className="w-[8px] h-[8px] ml-auto"><path d="M7 8V2.500H2M3.500.500 1.500 2.500 3.500 4.500" stroke="#ddd" fill="none" /></svg>}
            </div>
            <div className={`flex-1 pl-[3px] flex items-center ${b ? 'font-bold text-white' : ''}`}>{v}</div>
          </div>
        ))}
      </div>
      <div className="h-[122px] shrink-0" />
      <div className="h-[90px] shrink-0 border-t border-[#3f3f3f] pl-[5px] pt-[9px] text-[#6ba8e5] text-[11.2px]">
        <span className="underline">Create Endpoint</span><span>, </span><span className="underline">Create Prompt</span><span>, </span><span className="underline">Create Adapter</span>
      </div>
      <div className="flex-1 px-[5px] pt-[1px]">
        <div className="h-[18px] leading-[18px] font-bold text-white">(Name)</div>
        <div className="h-[18px] leading-[18px]">Indicates the name used in code to identify the object.</div>
      </div>
    </div>
  );
}

function StatusBar() {
  return (
    <div className="h-[24px] bg-[#3f3f3f] flex items-center shrink-0">
      <Ic n="comment" c="ml-[4px]" />
      <span className="ml-[8px]">Ready</span>
      <Ic n="up" c="ml-auto" />
      <span className="ml-[6px] w-[117px] whitespace-nowrap">Add to Source Control</span>
      <svg viewBox="0 0 7 4" className="w-[7px] h-[4px] ml-[6px] shrink-0"><path d="M0 4h7L3.500 0z" fill="#ddd" /></svg>
      <Ic n="repo" c="ml-[23px]" />
      <span className="ml-[6px] w-[90px] whitespace-nowrap">Select Repository</span>
      <svg viewBox="0 0 7 4" className="w-[7px] h-[4px] ml-[6px] shrink-0"><path d="M0 4h7L3.500 0z" fill="#ddd" /></svg>
      <div className="relative ml-[21px] mr-[15px] w-4 h-4 shrink-0">
        <Ic n="bell" />
        <div className="absolute left-[8px] top-[6px] w-[12px] h-[12px] rounded-full bg-[#f26b7a] text-[#222] text-[10px] leading-[12px] text-center">2</div>
      </div>
    </div>
  );
}

export default function App() {
  return (
    <div className="w-[1920px] h-[1032px] flex flex-col overflow-hidden bg-[#1f1f1f] text-[#f2f2f2] text-[11.4px] font-['Open_Sans',sans-serif]">
      <TitleBar />
      <ToolBar />
      <div className="flex-1 min-h-0 flex pl-[6px] pt-[1px] pb-[6px]">
        <Toolbox />
        <Document />
        <div className="ml-[7px] w-[530px] shrink-0 flex flex-col">
          <SolutionExplorer />
          <div className="h-[21px] shrink-0 flex border-t border-[#3f3f3f]">
            <div className="w-[102px] border-x border-b border-[#3f3f3f] flex items-center pl-[4px] shrink-0">Solution Explorer</div>
            <div className="ml-[5px] flex items-center text-[#a8a8a8]">Git Changes</div>
          </div>
          <Properties />
        </div>
      </div>
      <StatusBar />
    </div>
  );
}
